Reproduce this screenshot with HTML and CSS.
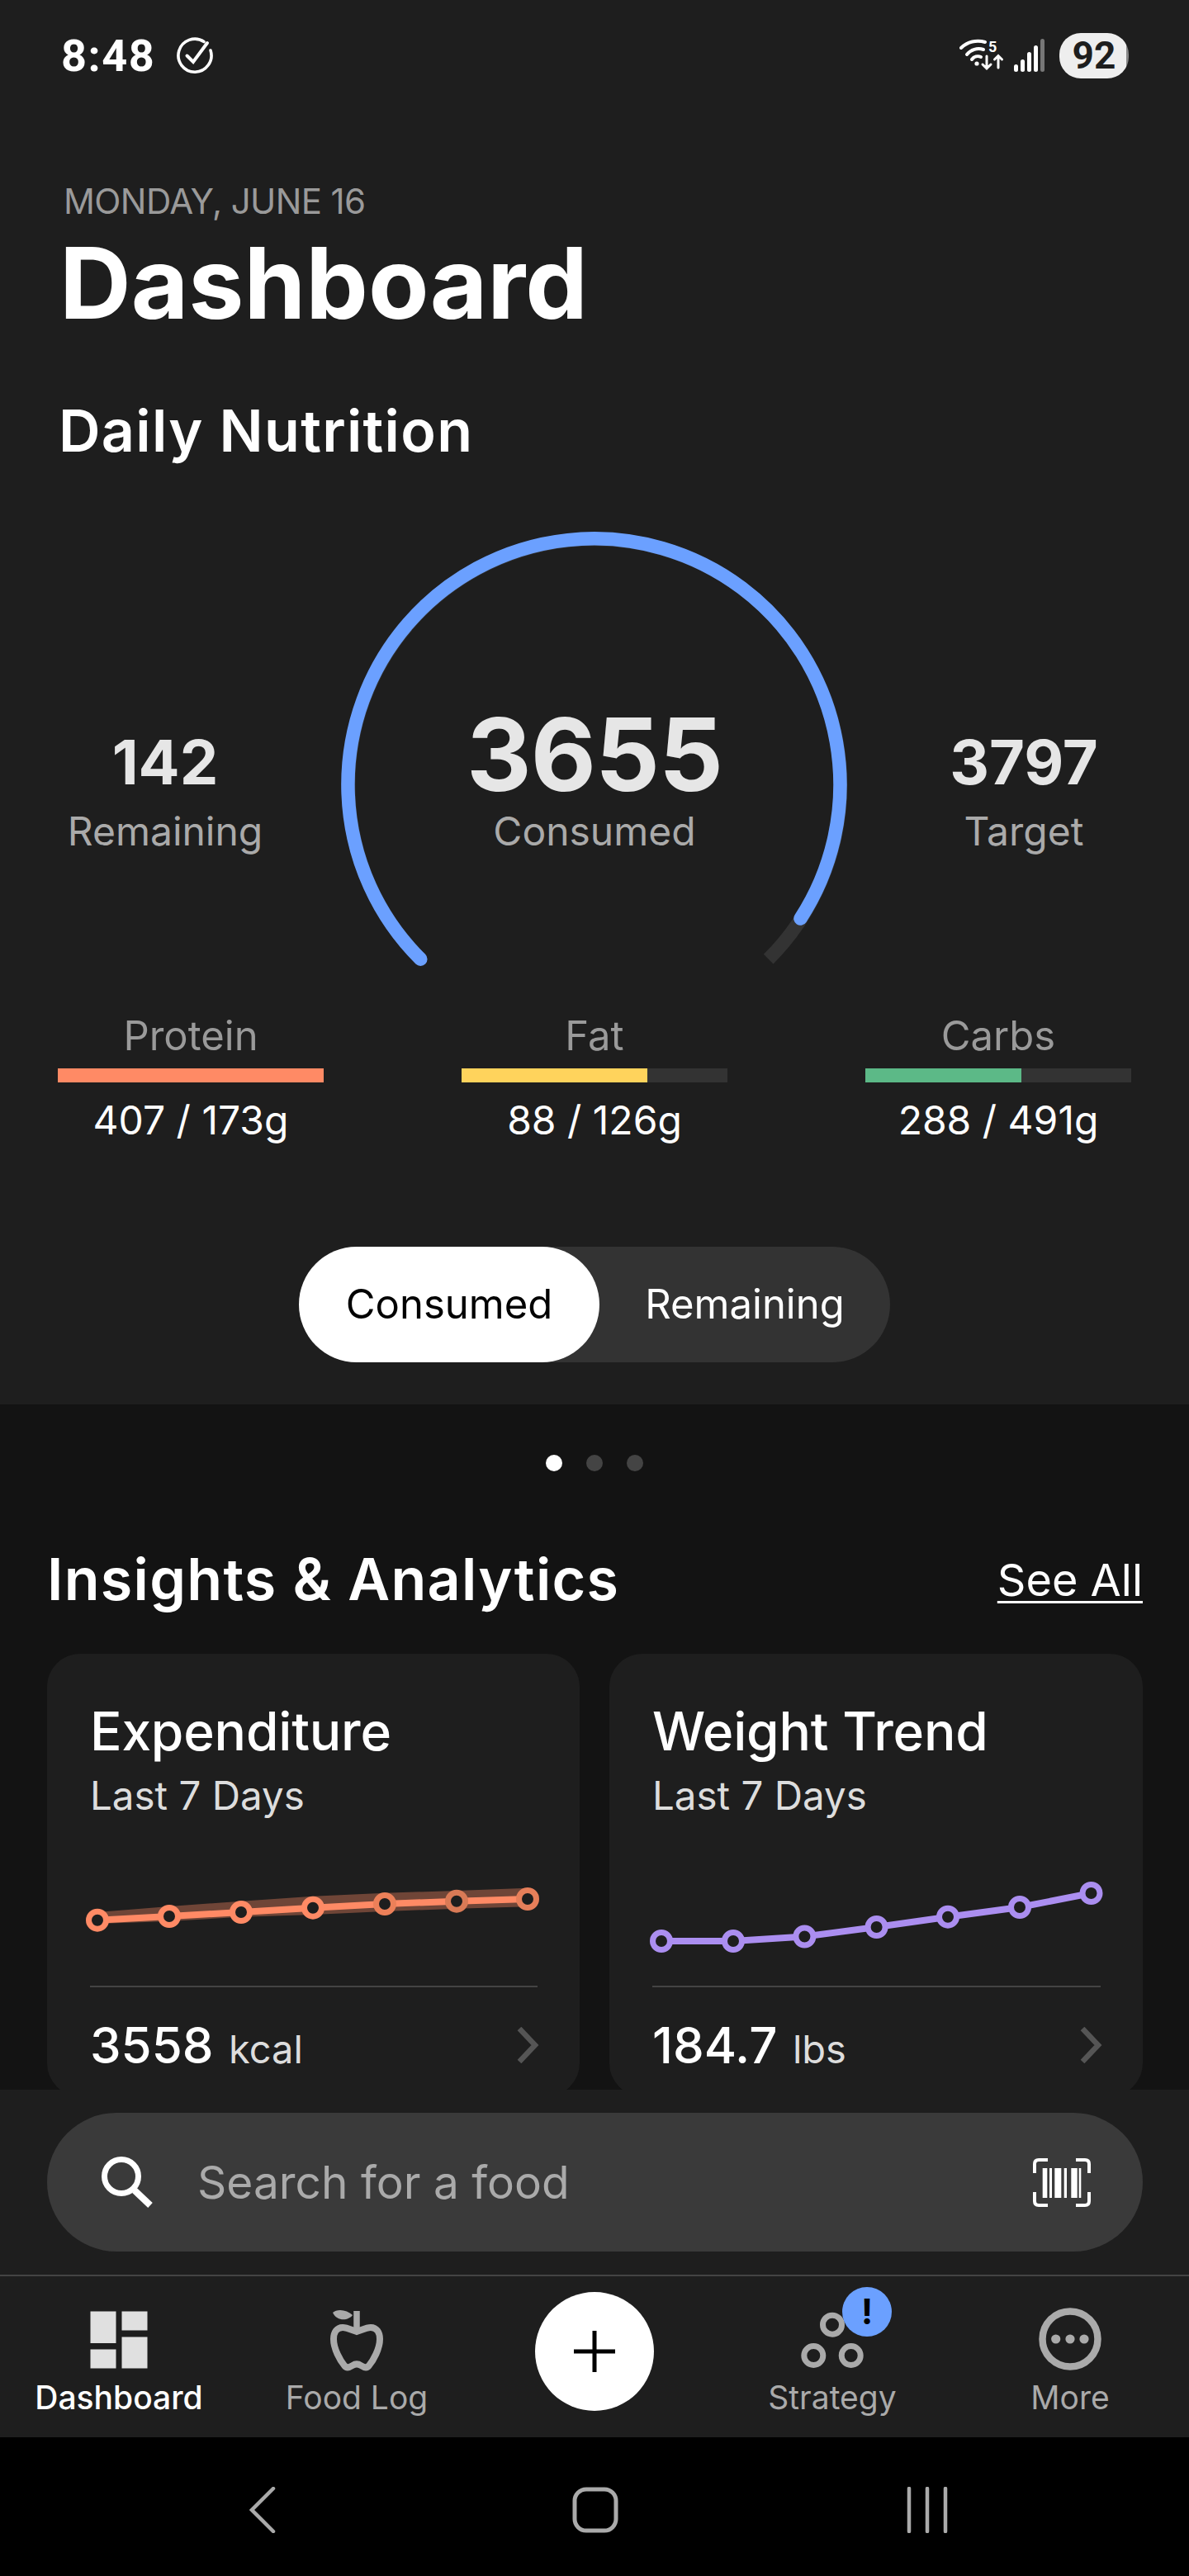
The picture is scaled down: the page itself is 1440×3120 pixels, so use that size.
FILE: index.html
```html
<!DOCTYPE html>
<html lang="en">
<head>
  <meta charset="UTF-8">
  <title>Dashboard</title>
  <link rel="stylesheet" href="styles.css">
</head>
<body>
<div class="phone">

  <div class="main">
    <section class="hero">
      <div class="status">
        <div class="status-left">
          <span class="time">8:48</span>
          <svg class="icon-check" width="46" height="46" viewBox="0 0 46 46" fill="none" stroke="#fff" stroke-width="3.6" stroke-linecap="round">
            <path d="M34 6.5A20 20 0 1 0 42 17"/>
            <path d="M13.5 23.5L21 31L38 8" stroke-width="4"/>
          </svg>
        </div>
        <div class="status-right">
          <svg class="icon-wifi" width="56" height="40" viewBox="0 0 56 40" fill="none" stroke="#fff" stroke-width="4" stroke-linecap="round">
            <path d="M2 11A29 29 0 0 1 31 4"/>
            <path d="M9 19A18 18 0 0 1 29 13"/>
            <path d="M15 25A9 9 0 0 1 26 22"/>
            <circle cx="21" cy="30" r="2.6" fill="#fff" stroke="none"/>
            <text x="35" y="16" class="wifi-five" fill="#fff" stroke="none">5</text>
            <path d="M33 21V36M28 31L33 36L38 31M47 35V21M42.500 25L47 20.500L51.500 25" stroke-width="3"/>
          </svg>
          <svg class="icon-signal" width="40" height="40" viewBox="0 0 40 40">
            <rect x="0" y="31" width="5" height="9" rx="2.500" fill="#fff"/>
            <rect x="8" y="25" width="5" height="15" rx="2.500" fill="#fff"/>
            <rect x="16" y="16" width="5" height="24" rx="2.500" fill="#fff"/>
            <rect x="24" y="8" width="5" height="32" rx="2.500" fill="#fff"/>
            <rect x="32" y="0" width="5" height="40" rx="2.500" fill="#777"/>
          </svg>
          <div class="battery">92</div>
        </div>
      </div>

      <div class="date">MONDAY, JUNE 16</div>
      <h1 class="title">Dashboard</h1>
      <h2 class="subtitle">Daily Nutrition</h2>

      <div class="gauge-row">
        <div class="stat">
          <div class="stat-num">142</div>
          <div class="stat-label">Remaining</div>
        </div>
        <div class="gauge">
          <svg class="gauge-arc" width="640" height="550" viewBox="0 0 640 550" fill="none" stroke-width="16.500">
            <path d="M109.300 530.700A298 298 0 1 1 530.700 530.700" stroke="#333"/>
            <path d="M109.300 530.700A298 298 0 1 1 569.500 481.500" stroke="#6ba0ff" stroke-linecap="round"/>
          </svg>
          <div class="gauge-text">
            <div class="gauge-num">3655</div>
            <div class="stat-label">Consumed</div>
          </div>
        </div>
        <div class="stat">
          <div class="stat-num">3797</div>
          <div class="stat-label">Target</div>
        </div>
      </div>

      <div class="macros">
        <div class="macro">
          <div class="macro-name">Protein</div>
          <div class="bar"><div class="bar-fill protein" style="width:100%"></div></div>
          <div class="macro-val">407 / 173g</div>
        </div>
        <div class="macro">
          <div class="macro-name">Fat</div>
          <div class="bar"><div class="bar-fill fat" style="width:69.8%"></div></div>
          <div class="macro-val">88 / 126g</div>
        </div>
        <div class="macro">
          <div class="macro-name">Carbs</div>
          <div class="bar"><div class="bar-fill carbs" style="width:58.700%"></div></div>
          <div class="macro-val">288 / 491g</div>
        </div>
      </div>

      <div class="toggle-wrap">
        <div class="toggle">
          <div class="toggle-on">Consumed</div>
          <div class="toggle-off">Remaining</div>
        </div>
      </div>
    </section>

    <div class="dots">
      <span class="dot active"></span>
      <span class="dot"></span>
      <span class="dot"></span>
    </div>

    <div class="section-head">
      <h2 class="section-title">Insights &amp; Analytics</h2>
      <a class="see-all">See All</a>
    </div>

    <div class="cards">
      <div class="card">
        <div class="card-title">Expenditure</div>
        <div class="card-sub">Last 7 Days</div>
        <svg class="chart" width="540" height="120" viewBox="0 0 540 120" fill="none">
          <path d="M9 63L96 56L183 49.700L270 43.700L357 39.700L444 37L530 33.700V56.300L444 58.700L357 62L270 66L183 68.700L96 74L9 77Z" fill="#ff8a65" fill-opacity=".36"/>
          <path d="M9 72.700L96 68L183 63L270 57.700L357 53L444 49.700L530 47" stroke="#ff8a65" stroke-width="8"/>
          <g fill="#1e1e1e" stroke-width="7">
            <circle cx="9" cy="72.700" r="10.500" stroke="#ff8a65"/>
            <circle cx="96" cy="68" r="10.500" stroke="#ff8a65"/>
            <circle cx="183" cy="63" r="10.500" stroke="#ff8a65"/>
            <circle cx="270" cy="57.700" r="10.500" stroke="#ff8a65"/>
            <circle cx="357" cy="53" r="10.500" stroke="#ec8059"/>
            <circle cx="444" cy="49.700" r="10.500" stroke="#d97a56"/>
            <circle cx="530" cy="47" r="10.500" stroke="#e67f5a"/>
          </g>
        </svg>
        <div class="card-foot">
          <div><span class="card-val">3558</span> <span class="card-unit">kcal</span></div>
          <svg class="chev" width="28" height="44" viewBox="0 0 28 44" fill="none" stroke="#555" stroke-width="6.500"><path d="M4 2L23 22L4 42"/></svg>
        </div>
      </div>

      <div class="card">
        <div class="card-title">Weight Trend</div>
        <div class="card-sub">Last 7 Days</div>
        <svg class="chart" width="540" height="120" viewBox="0 0 540 120" fill="none">
          <path d="M11 98L98 98L184.400 92.500L271.600 81L358 68.700L445 57L531.500 40" stroke="#ab8ef0" stroke-width="8"/>
          <g fill="#1e1e1e" stroke="#ab8ef0" stroke-width="7">
            <circle cx="11" cy="98" r="10.500"/>
            <circle cx="98" cy="98" r="10.500"/>
            <circle cx="184.400" cy="92.500" r="10.500"/>
            <circle cx="271.600" cy="81" r="10.500"/>
            <circle cx="358" cy="68.700" r="10.500"/>
            <circle cx="445" cy="57" r="10.500"/>
            <circle cx="531.500" cy="40" r="10.500"/>
          </g>
        </svg>
        <div class="card-foot">
          <div><span class="card-val">184.7</span> <span class="card-unit">lbs</span></div>
          <svg class="chev" width="28" height="44" viewBox="0 0 28 44" fill="none" stroke="#555" stroke-width="6.500"><path d="M4 2L23 22L4 42"/></svg>
        </div>
      </div>
    </div>
  </div>

  <div class="footer">
    <div class="search">
      <svg class="icon-search" width="64" height="64" viewBox="0 0 64 64" fill="none" stroke="#fff">
        <circle cx="25" cy="25" r="20.500" stroke-width="7"/>
        <path d="M41 42L60 60" stroke-width="8"/>
      </svg>
      <span class="search-text">Search for a food</span>
      <svg class="icon-barcode" width="70" height="59" viewBox="0 0 70 59">
        <path d="M18 2H7Q2 2 2 7V18M52 2H63Q68 2 68 7V18M18 57H7Q2 57 2 52V41M52 57H63Q68 57 68 52V41" fill="none" stroke="#fff" stroke-width="4"/>
        <g fill="#fff">
          <rect x="11.700" y="12" width="5.600" height="36"/>
          <rect x="20" y="12" width="3" height="36"/>
          <rect x="26.300" y="12" width="8" height="36"/>
          <rect x="37.700" y="12" width="3.300" height="36"/>
          <rect x="46.300" y="12" width="7.400" height="36"/>
          <rect x="55.700" y="12" width="2.600" height="36"/>
        </g>
      </svg>
    </div>

    <nav class="tabs">
      <div class="tab active">
        <svg width="70" height="76" viewBox="0 0 70 76" fill="#e0e0e0">
          <rect x="0.500" y="0.500" width="31" height="38.500"/>
          <rect x="38.500" y="0.500" width="31" height="23"/>
          <rect x="0.500" y="46.500" width="31" height="23"/>
          <rect x="38.500" y="31.500" width="31" height="38"/>
        </svg>
        <span class="tab-label">Dashboard</span>
      </div>
      <div class="tab">
        <svg width="72" height="80" viewBox="0 0 72 80" fill="none" stroke="#aaa">
          <path d="M36 4V31" stroke-width="7.500"/>
          <path d="M7 6C12 1 24 2 31 9C26 16 12 17 7 6Z" fill="#aaa" stroke="none"/>
          <path d="M36 29C30 27 24 24 19 24C12 24 8 30 8 38C8 50 16 64 21 70C24 74 28 72 31 70C34 68 38 68 41 70C44 72 48 74 51 70C56 64 64 50 64 38C64 30 60 24 53 24C48 24 42 27 36 29Z" stroke-width="8"/>
        </svg>
        <span class="tab-label">Food Log</span>
      </div>
      <div class="tab tab-add">
        <div class="fab">
          <svg width="50" height="50" viewBox="0 0 50 50" stroke="#000" stroke-width="5"><path d="M25 0V50M0 25H50"/></svg>
        </div>
      </div>
      <div class="tab">
        <div class="strategy">
          <svg width="80" height="82" viewBox="0 0 80 82" fill="none" stroke="#aaa" stroke-width="7">
            <circle cx="40" cy="22.700" r="11.500"/>
            <circle cx="17.300" cy="60" r="11.500"/>
            <circle cx="62.700" cy="60" r="11.500"/>
          </svg>
          <div class="badge">!</div>
        </div>
        <span class="tab-label">Strategy</span>
      </div>
      <div class="tab">
        <svg width="76" height="80" viewBox="0 0 76 80">
          <circle cx="38" cy="38" r="33.500" fill="none" stroke="#aaa" stroke-width="8.500"/>
          <circle cx="20.700" cy="38" r="5.600" fill="#aaa"/>
          <circle cx="38" cy="38" r="5.600" fill="#aaa"/>
          <circle cx="55" cy="38" r="5.600" fill="#aaa"/>
        </svg>
        <span class="tab-label">More</span>
      </div>
    </nav>
  </div>

  <div class="sysnav">
    <svg width="32" height="56" viewBox="0 0 32 56" fill="none" stroke="#aaa" stroke-width="4.500" stroke-linecap="round"><path d="M29 2L3 28L29 54"/></svg>
    <svg class="nav-home" width="56" height="56" viewBox="0 0 56 56" fill="none" stroke="#aaa" stroke-width="5"><rect x="3" y="3" width="50" height="50" rx="14"/></svg>
    <svg width="50" height="56" viewBox="0 0 50 56" fill="none" stroke="#aaa" stroke-width="4.500" stroke-linecap="round"><path d="M3 2V54M25 2V54M47 2V54"/></svg>
  </div>

</div>
</body>
</html>
```

FILE: styles.css
```css
* {
  box-sizing: border-box;
}
body {
  margin: 0;
  background: #131313;
  color: #fff;
  font-family: "Inter", "Noto Sans", sans-serif;
}
h1, h2 {
  margin: 0;
}
svg {
  display: block;
}
.phone {
  width: 1440px;
  height: 3120px;
  display: flex;
  flex-direction: column;
  overflow: hidden;
}
.main {
  flex: 1;
  min-height: 0;
  overflow: hidden;
}

/* top panel */
.hero {
  height: 1701px;
  background: #1e1e1e;
}
.status {
  height: 134px;
  padding: 0 73px 0 74px;
  display: flex;
  justify-content: space-between;
  align-items: center;
}
.status-left {
  display: flex;
  align-items: center;
  gap: 25px;
}
.time {
  font-family: "Roboto", sans-serif;
  font-size: 54px;
  font-weight: 700;
  letter-spacing: 1.500px;
}
.status-right {
  display: flex;
  align-items: center;
}
.icon-wifi {
  margin-right: 10px;
}
.icon-signal {
  margin-right: 15px;
}
.wifi-five {
  font-family: "Roboto", sans-serif;
  font-size: 18px;
  font-weight: 700;
}
.battery {
  width: 84px;
  height: 55px;
  border-radius: 26px;
  background: linear-gradient(to right, #eee 96%, #888 96%);
  color: #1e1e1e;
  font-family: "Roboto", sans-serif;
  font-size: 46px;
  font-weight: 700;
  line-height: 55px;
  text-align: center;
}
.date {
  margin: 85px 0 0 77px;
  font-size: 42px;
  line-height: 50px;
  letter-spacing: -0.600px;
  color: #9a9a9a;
}
.title {
  margin: 9px 0 0 72px;
  font-size: 120px;
  line-height: 130px;
  font-weight: 700;
}
.subtitle {
  margin: 74px 0 0 71px;
  font-size: 70px;
  line-height: 80px;
  font-weight: 600;
  letter-spacing: 1.300px;
}

/* gauge */
.gauge-row {
  margin-top: 69px;
  height: 550px;
  display: grid;
  grid-template-columns: 400px 640px 400px;
}
.stat {
  padding-top: 250px;
  text-align: center;
}
.stat-num {
  font-size: 74px;
  line-height: 84px;
  font-weight: 700;
  color: #e6e6e6;
}
.stat-label {
  margin-top: 12px;
  font-size: 48px;
  line-height: 60px;
  color: #aaa;
}
.gauge {
  display: grid;
}
.gauge-arc, .gauge-text {
  grid-area: 1 / 1;
}
.gauge-text {
  padding-top: 226px;
  text-align: center;
}
.gauge-num {
  font-size: 122px;
  line-height: 114px;
  font-weight: 700;
  letter-spacing: -1px;
  color: #e6e6e6;
  margin-bottom: -6px;
}

/* macros */
.macros {
  margin-top: 46px;
  padding: 0 70px;
  display: grid;
  grid-template-columns: repeat(3, 322px);
  justify-content: space-between;
  text-align: center;
}
.macro-name {
  font-size: 49px;
  line-height: 56px;
  color: #9a9a9a;
}
.bar {
  margin-top: 11px;
  height: 17px;
  background: #333;
}
.bar-fill {
  height: 100%;
}
.protein {
  background: #ff8a65;
}
.fat {
  background: #ffd35c;
}
.carbs {
  background: #5cb987;
}
.macro-val {
  margin-top: 18px;
  font-size: 48px;
  line-height: 56px;
}

/* toggle */
.toggle-wrap {
  margin-top: 125px;
  display: flex;
  justify-content: center;
}
.toggle {
  width: 716px;
  height: 140px;
  display: flex;
  border-radius: 70px;
  background: #333;
  font-size: 49px;
}
.toggle-on {
  width: 364px;
  border-radius: 70px;
  background: #fff;
  color: #000;
  line-height: 140px;
  text-align: center;
}
.toggle-off {
  flex: 1;
  line-height: 140px;
  text-align: center;
}

/* lower area */
.dots {
  height: 142px;
  display: flex;
  justify-content: center;
  align-items: center;
  gap: 29px;
}
.dot {
  width: 20px;
  height: 20px;
  border-radius: 50%;
  background: #444;
}
.dot.active {
  background: #fff;
}
.section-head {
  padding: 30px 56px 0 57px;
  display: flex;
  justify-content: space-between;
  align-items: center;
}
.section-title {
  font-size: 70px;
  line-height: 80px;
  font-weight: 600;
  letter-spacing: 1.300px;
}
.see-all {
  font-size: 54px;
  text-decoration: underline;
  text-decoration-thickness: 3px;
  text-underline-offset: 6px;
}
.cards {
  margin-top: 50px;
  padding: 0 56px 0 57px;
  display: grid;
  grid-template-columns: 645px 646px;
  gap: 36px;
}
.card {
  height: 536px;
  padding: 54px 51px 0 52px;
  border-radius: 40px;
  background: #1e1e1e;
}
.card-title {
  font-size: 64px;
  line-height: 80px;
  font-weight: 500;
  letter-spacing: -0.200px;
}
.card-sub {
  margin-top: 10px;
  font-size: 47.500px;
  line-height: 56px;
  color: #ddd;
}
.chart {
  margin-top: 50px;
  overflow: visible;
}
.card-foot {
  margin-top: 32px;
  padding-top: 34px;
  border-top: 2px solid #444;
  display: flex;
  justify-content: space-between;
  align-items: center;
}
.card-val {
  font-size: 60px;
  font-weight: 500;
}
.card-unit {
  margin-left: 14px;
  font-size: 47px;
  color: #ddd;
}
.chev {
  margin-right: -2px;
}

/* footer */
.footer {
  height: 421px;
  padding-top: 28px;
  background: #1e1e1e;
}
.search {
  margin: 0 56px 0 57px;
  height: 168px;
  padding: 0 63px 0 65px;
  display: flex;
  align-items: center;
  border-radius: 84px;
  background: #3a3a3a;
}
.icon-search {
  margin-right: 53px;
}
.search-text {
  flex: 1;
  font-size: 55px;
  color: #aaa;
}
.tabs {
  margin-top: 28px;
  height: 197px;
  border-top: 2px solid #444;
  display: grid;
  grid-template-columns: repeat(5, 288px);
}
.tab {
  height: 195px;
  padding-bottom: 25px;
  display: flex;
  flex-direction: column;
  align-items: center;
  justify-content: flex-end;
}
.tab-label {
  margin-top: 6px;
  font-size: 39px;
  line-height: 46px;
  color: #aaa;
}
.tab.active .tab-label {
  color: #fff;
  font-weight: 500;
}
.tab-add {
  padding-bottom: 13px;
  justify-content: center;
}
.fab {
  width: 144px;
  height: 144px;
  border-radius: 50%;
  background: #fff;
  display: flex;
  align-items: center;
  justify-content: center;
}
.strategy {
  position: relative;
}
.badge {
  position: absolute;
  top: -23px;
  right: -32px;
  width: 60px;
  height: 60px;
  border-radius: 50%;
  background: #6ba0ff;
  color: #000;
  font-size: 42px;
  font-weight: 700;
  line-height: 60px;
  text-align: center;
}

/* android nav */
.sysnav {
  height: 168px;
  padding: 8px 0 0 302px;
  background: #000;
  display: flex;
  align-items: center;
}
.nav-home {
  margin: 0 349px 0 359px;
}
```
